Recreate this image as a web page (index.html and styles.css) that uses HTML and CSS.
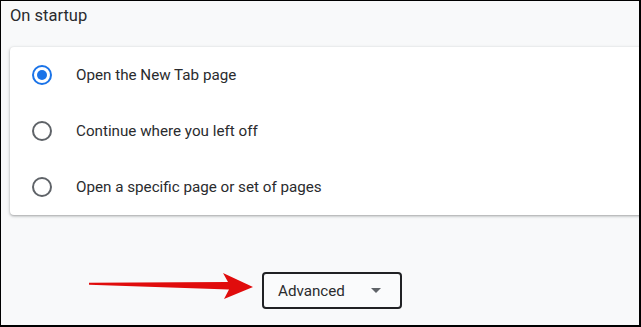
FILE: index.html
```html
<!DOCTYPE html>
<html lang="en">
<head>
    <meta charset="UTF-8">
    <title>Settings - On startup</title>
    <link rel="stylesheet" href="styles.css">
</head>
<body>
    <div class="frame">
        <div class="section-title">On startup</div>
        <div class="card">
            <div class="radio-row">
                <span class="radio checked"></span>
                <span class="radio-label">Open the New Tab page</span>
            </div>
            <div class="radio-row">
                <span class="radio"></span>
                <span class="radio-label">Continue where you left off</span>
            </div>
            <div class="radio-row">
                <span class="radio"></span>
                <span class="radio-label">Open a specific page or set of pages</span>
            </div>
        </div>
        <div class="advanced-row">
            <!-- red pointer arrow -->
            <svg class="pointer" width="166" height="37" viewBox="0 0 166 37">
                <polygon points="0,10.7 139,10 134,1 164,15 135,27 140,17.5 0,12.7" fill="#e00c0c"/>
            </svg>
            <button class="advanced-btn">
                <span>Advanced</span>
                <svg class="caret" width="10" height="5" viewBox="0 0 10 5">
                    <polygon points="0,0 10,0 5,5" fill="#5f6368"/>
                </svg>
            </button>
        </div>
    </div>
</body>
</html>
```

FILE: styles.css
```css
body {
    margin: 0;
    font-family: Roboto, 'Liberation Sans', sans-serif;
    color: #202124;
}
.frame {
    width: 641px;
    height: 327px;
    box-sizing: border-box;
    border-style: solid;
    border-color: #000;
    border-width: 1px 2px 2px 1px;
    background: #f8f9fa;
    overflow: hidden;
}
.section-title {
    font-size: 16.5px;
    line-height: 22px;
    padding: 4px 0 0 9px;
    margin-bottom: 20px;
    color: #2a2b2e;
}
.card {
    background: white;
    border-radius: 4px;
    margin: 0 -10px 0 9px;
    box-shadow: 0 1px 2px rgba(60,64,67,0.3), 0 1px 3px 1px rgba(60,64,67,0.15);
}
.radio-row {
    display: flex;
    align-items: center;
    height: 56px;
    padding-left: 22px;
}
.radio {
    width: 20px;
    height: 20px;
    box-sizing: border-box;
    border: 2px solid #5f6368;
    border-radius: 50%;
    position: relative;
    flex-shrink: 0;
}
.radio.checked {
    border-color: #1a73e8;
}
.radio.checked::after {
    content: '';
    position: absolute;
    left: 3px;
    top: 3px;
    width: 10px;
    height: 10px;
    border-radius: 50%;
    background: #1a73e8;
}
.radio-label {
    margin-left: 24px;
    font-size: 15.2px;
    color: #2a2b2e;
}
.advanced-row {
    display: flex;
    align-items: flex-start;
    margin-top: 57px;
    padding-left: 88px;
}
.pointer {
    display: block;
}
.advanced-btn {
    display: flex;
    align-items: center;
    margin-left: 7px;
    height: 37px;
    box-sizing: border-box;
    padding: 0 19px 0 14px;
    border: 2px solid #202124;
    border-radius: 4px;
    background: #fafbfc;
    font-family: Roboto, 'Liberation Sans', sans-serif;
    font-size: 15.2px;
    color: #2a2b2e;
}
.caret {
    margin-left: 26px;
}
```
